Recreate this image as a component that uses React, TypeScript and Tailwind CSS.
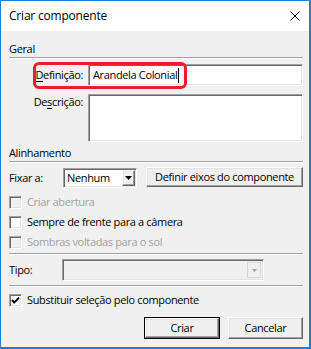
import React from "react";

const sunken =
  "border border-t-[#a0a0a0] border-l-[#a0a0a0] border-r-white border-b-white shadow-[inset_1px_1px_0_#696969,inset_-1px_-1px_0_#e3e3e3]";
const raised =
  "border border-t-white border-l-white border-r-[#696969] border-b-[#696969] shadow-[inset_-1px_-1px_0_#a0a0a0,inset_1px_1px_0_#e3e3e3]";

function Sep() {
  return <div className="h-[2px] border-t border-t-[#a0a0a0] border-b border-b-white" />;
}

function Check({ checked, disabled, label }: { checked?: boolean; disabled?: boolean; label: string }) {
  return (
    <div className="h-[20px] flex items-center">
      <div
        className={`w-[13px] h-[13px] ${sunken} ${disabled ? "bg-[#f0f0f0]" : "bg-white"} flex items-center justify-center`}
      >
        {checked && (
          <svg width="9" height="9" viewBox="0 0 9 9">
            <path d="M1 4 L3.2 6.6 L8 1.6" stroke="#000" strokeWidth="2" fill="none" />
          </svg>
        )}
      </div>
      <span className={`ml-[5px] ${disabled ? "text-[#a0a0a0]" : "text-black"}`}>{label}</span>
    </div>
  );
}

export default function App() {
  return (
    <div className="w-[311px] h-[349px] flex flex-col border-l border-t border-r-2 border-b-2 border-[#1b80d6] bg-[#f0f0f0] text-black text-[11px] leading-[16px] tracking-[-0.35px] font-['Open_Sans','Noto_Sans',sans-serif] overflow-hidden">
      <div className="h-[30px] shrink-0 bg-white flex items-center justify-between pl-[8px] pr-[9px]">
        <span className="text-[12px] tracking-[-0.2px]">Criar componente</span>
        <svg width="10" height="10" viewBox="0 0 10 10">
          <path d="M0.5 0.5 L9.5 9.5 M9.5 0.5 L0.5 9.5" stroke="#000" strokeWidth="1" fill="none" />
        </svg>
      </div>
      <div className="flex-1 flex flex-col pl-[8px] pr-[6px]">
        <div className="mt-[10px] h-[16px] flex items-center">Geral</div>
        <Sep />
        <div className="mt-[5px] h-[22px] flex items-center relative">
          <div className="w-[74px] text-right">
            <span className="underline underline-offset-2">D</span>efinição:
          </div>
          <div className={`ml-[5px] flex-1 h-[22px] bg-white ${sunken} flex items-center pl-[4px]`}>
            <span>Arandela Colonial</span>
            <span className="inline-block w-px h-[15px] bg-black ml-px" />
          </div>
          <div className="absolute left-[24px] top-[-2px] w-[154px] h-[27px] border-[3px] border-[#ee1c24] rounded-[6px]" />
        </div>
        <div className="mt-[8px] h-[48px] flex items-start">
          <div className="w-[74px] text-right">
            De<span className="underline underline-offset-2">s</span>crição:
          </div>
          <div className={`ml-[5px] flex-1 h-[48px] bg-white ${sunken}`} />
        </div>
        <div className="mt-[3px] h-[16px] flex items-center">Alinhamento</div>
        <Sep />
        <div className="mt-[4px] h-[21px] flex">
          <div className="w-[54px] self-end h-[20px] flex items-center">Fixar a:</div>
          <div className={`self-end w-[74px] h-[20px] bg-white ${sunken} flex items-center justify-between pl-[3px] pr-[1px]`}>
            <span>Nenhum</span>
            <div className={`w-[13px] h-[16px] bg-[#f0f0f0] ${raised} flex items-center justify-center`}>
              <svg width="7" height="4" viewBox="0 0 7 4">
                <path d="M0 0 H7 L3.5 4 Z" fill="#000" />
              </svg>
            </div>
          </div>
          <div className={`ml-[9px] flex-1 h-[20px] bg-[#f0f0f0] ${raised} flex items-center justify-center`}>
            Definir eixos do componente
          </div>
        </div>
        <div className="mt-[4px] flex flex-col">
          <Check disabled label="Criar abertura" />
          <Check label="Sempre de frente para a câmera" />
          <Check disabled label="Sombras voltadas para o sol" />
        </div>
        <div className="mt-[1px]">
          <Sep />
        </div>
        <div className="mt-[4px] h-[22px] flex items-center">
          <div className="w-[53px]">Tipo:</div>
          <div className={`w-[202px] h-[22px] bg-[#f0f0f0] ${sunken} flex items-center justify-end pr-[2px]`}>
            <div className="w-[14px] h-[16px] border border-[#d8d8d8] flex items-center justify-center">
              <svg width="5" height="3" viewBox="0 0 5 3">
                <path d="M0 0 H5 L2.5 3 Z" fill="#a0a0a0" />
              </svg>
            </div>
          </div>
        </div>
        <div className="mt-[4px]">
          <Sep />
        </div>
        <div className="mt-[3px]">
          <Check checked label="Substituir seleção pelo componente" />
        </div>
        <div className="mt-[7px] flex justify-end gap-[8px]">
          <div className="w-[76px] h-[22px] border border-black">
            <div className={`w-full h-full bg-[#f0f0f0] ${raised} flex items-center justify-center`}>Criar</div>
          </div>
          <div className={`w-[75px] h-[22px] bg-[#f0f0f0] ${raised} flex items-center justify-center`}>Cancelar</div>
        </div>
      </div>
    </div>
  );
}
